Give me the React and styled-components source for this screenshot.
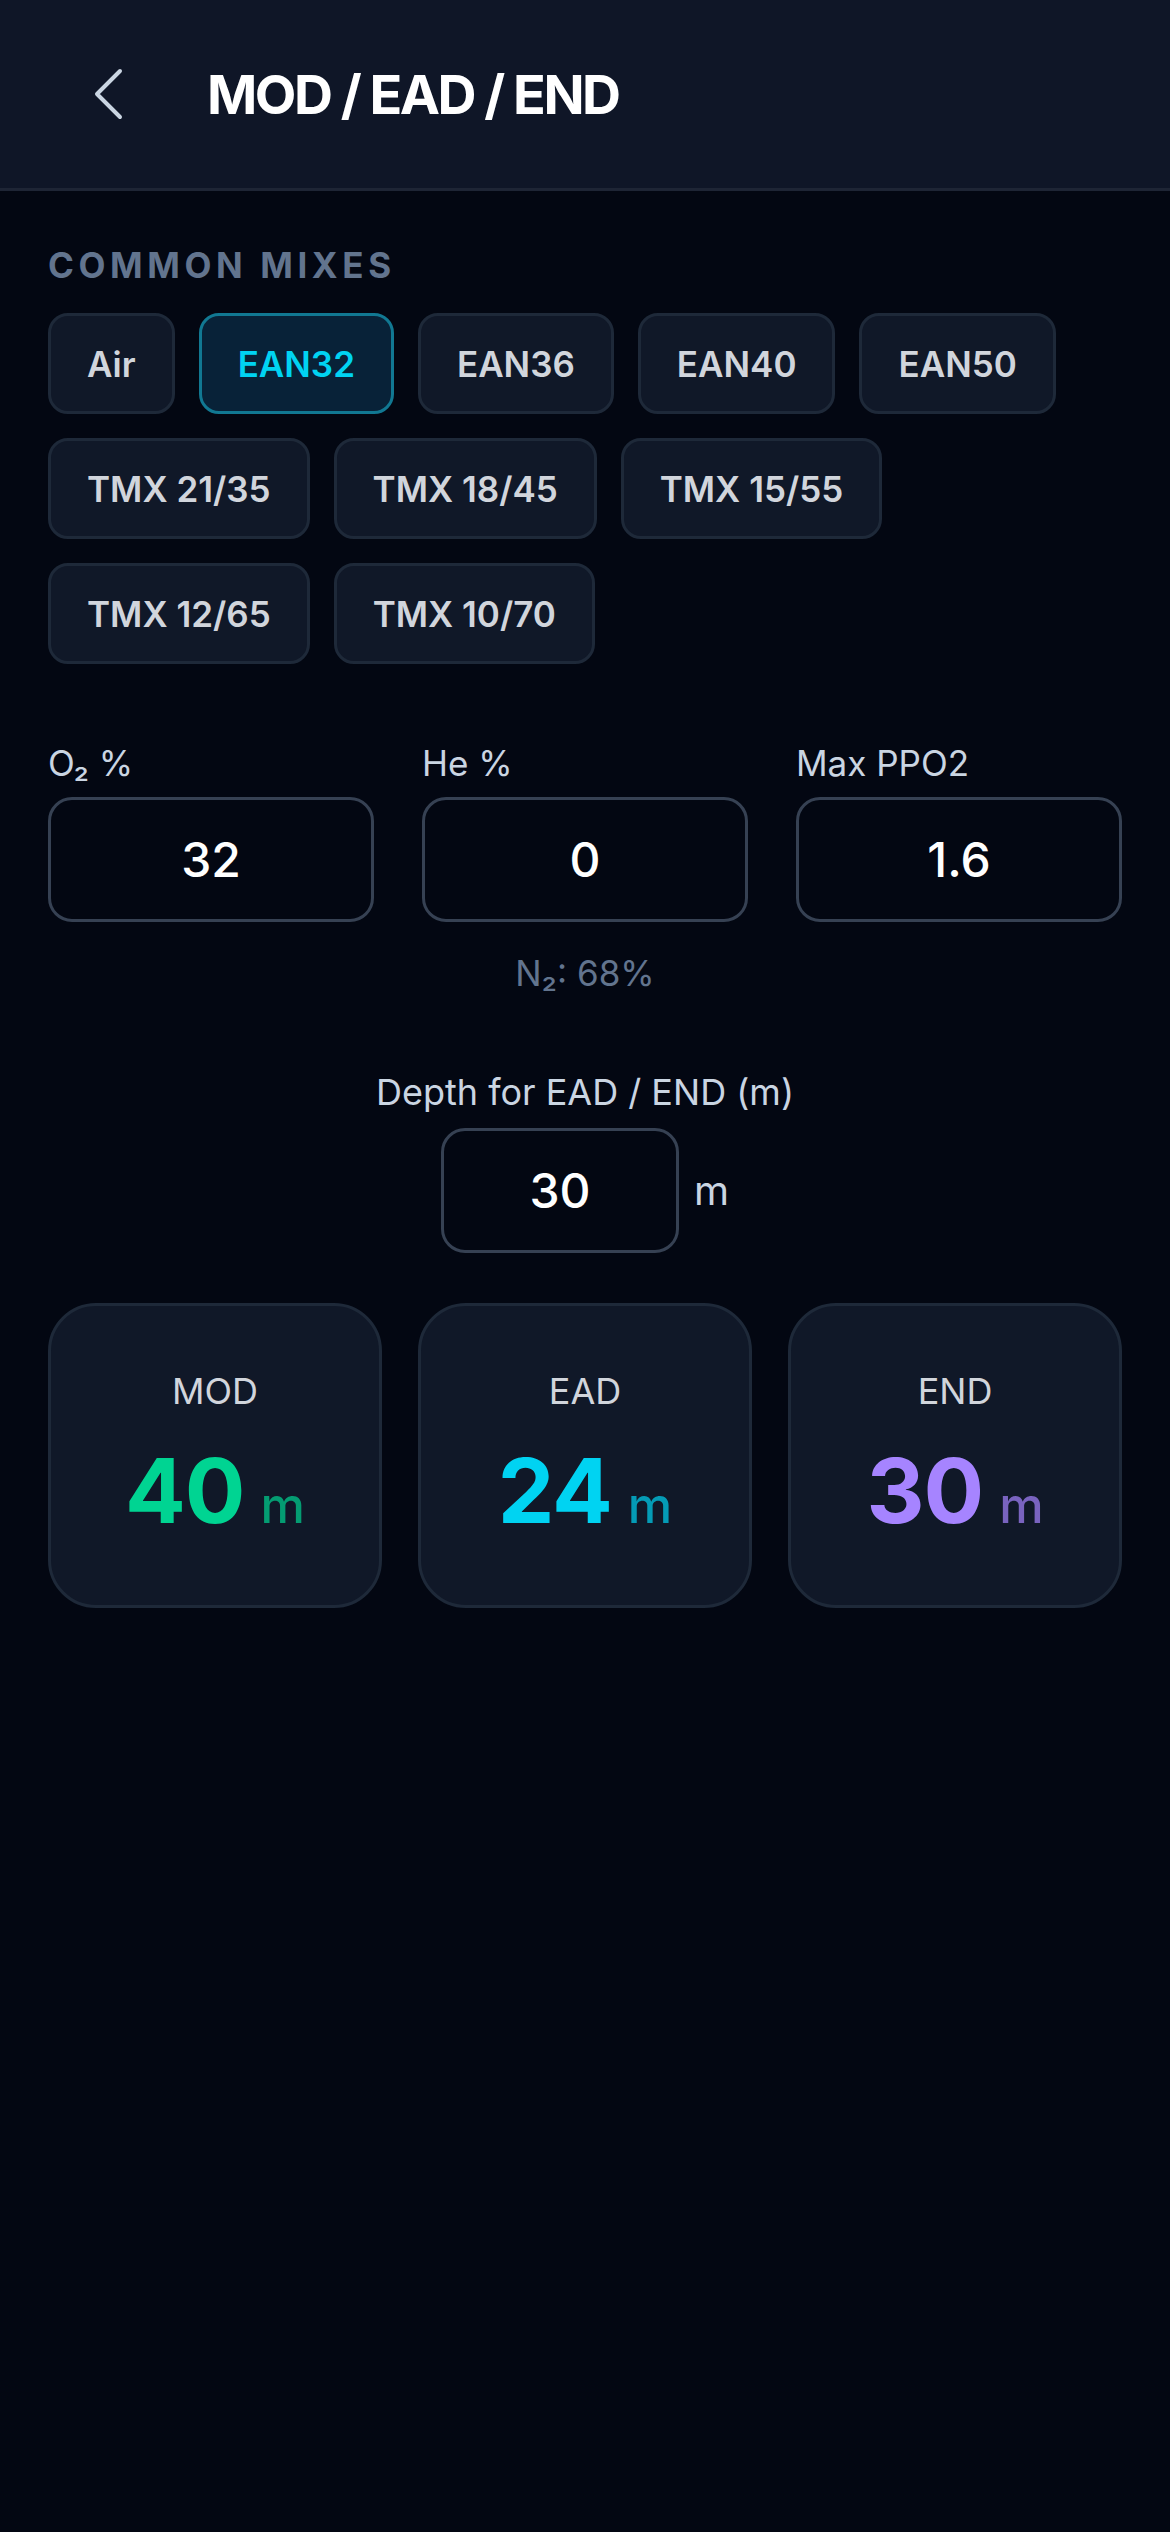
import React from "react";
import styled, { createGlobalStyle } from "styled-components";

const GlobalStyle = createGlobalStyle`
  html, body {
    margin: 0;
    padding: 0;
    background: #030712;
  }
  body {
    font-family: Inter, "Noto Sans", "Liberation Sans", sans-serif;
    color: #d1d5dc;
    min-height: 2532px;
  }
  * {
    box-sizing: border-box;
  }
`;

const Screen = styled.div`
  width: 1170px;
  min-height: 2532px;
  background: #030712;
`;

const Header = styled.header`
  height: 191px;
  display: flex;
  align-items: center;
  padding: 0 0 0 94px;
  background: #0f1627;
  border-bottom: 3px solid #1e2535;
`;

const BackButton = styled.button`
  all: unset;
  box-sizing: border-box;
  width: 30px;
  height: 52px;
  display: flex;
  align-items: center;
  justify-content: center;
  margin-right: 83px;
  color: #cad5e2;
`;

const Title = styled.h1`
  margin: 0;
  font-size: 54px;
  font-weight: 700;
  letter-spacing: -2.5px;
  color: #ffffff;
`;

const Content = styled.main`
  padding: 54px 48px 0;
`;

const SectionLabel = styled.div`
  font-size: 35px;
  line-height: 40px;
  font-weight: 700;
  letter-spacing: 4.6px;
  color: #62748e;
  margin-bottom: 28px;
`;

const ChipWrap = styled.div`
  display: flex;
  flex-wrap: wrap;
  gap: 24px;
`;

const Chip = styled.button`
  all: unset;
  box-sizing: border-box;
  height: 101px;
  padding: 0 36px;
  display: flex;
  align-items: center;
  border-radius: 20px;
  font-size: 35px;
  font-weight: 600;
  border: 3px solid ${(p) => (p.$active ? "#117892" : "#1e2939")};
  background: ${(p) => (p.$active ? "#082238" : "#101828")};
  color: ${(p) => (p.$active ? "#00d3f2" : "#d1d5dc")};
`;

const FieldGrid = styled.div`
  display: grid;
  grid-template-columns: repeat(3, 1fr);
  gap: 48px;
  margin-top: 79px;
`;

const Field = styled.div`
  display: flex;
  flex-direction: column;
`;

const FieldLabel = styled.label`
  font-size: 35px;
  line-height: 40px;
  color: #cad5e2;
  margin-bottom: 14px;
`;

const NumberBox = styled.div`
  height: 125px;
  width: ${(p) => p.$width || "100%"};
  display: flex;
  align-items: center;
  justify-content: center;
  border: 3px solid #364153;
  border-radius: 24px;
  background: #030712;
  font-size: 48px;
  font-weight: 500;
  color: #ffffff;
`;

const Note = styled.div`
  margin-top: 31px;
  text-align: center;
  font-size: 35px;
  line-height: 40px;
  color: #62748e;
`;

const DepthSection = styled.div`
  margin-top: 79px;
  display: flex;
  flex-direction: column;
  align-items: center;
`;

const DepthLabel = styled.div`
  font-size: 36px;
  line-height: 40px;
  color: #cad5e2;
  margin-bottom: 16px;
`;

const DepthRow = styled.div`
  display: flex;
  align-items: center;
  gap: 15px;
`;

const Unit = styled.span`
  font-size: 40px;
  color: #cad5e2;
`;

const Results = styled.div`
  display: grid;
  grid-template-columns: repeat(3, 1fr);
  gap: 36px;
  margin-top: 50px;
`;

const ResultCard = styled.div`
  height: 305px;
  display: flex;
  flex-direction: column;
  align-items: center;
  justify-content: center;
  padding-bottom: 5px;
  background: #101828;
  border: 3px solid #1e2939;
  border-radius: 48px;
`;

const ResultLabel = styled.div`
  font-size: 36px;
  line-height: 40px;
  color: #d1d5dc;
  margin-bottom: 35px;
`;

const ResultValue = styled.div`
  display: flex;
  align-items: baseline;
  gap: 16px;
  color: ${(p) => p.$color};
`;

const BigNumber = styled.span`
  font-size: 90px;
  line-height: 90px;
  font-weight: 700;
  letter-spacing: -1px;
`;

const ResultUnit = styled.span`
  font-size: 50px;
  font-weight: 500;
  opacity: 0.7;
`;

const mixes = [
  "Air",
  "EAN32",
  "EAN36",
  "EAN40",
  "EAN50",
  "TMX 21/35",
  "TMX 18/45",
  "TMX 15/55",
  "TMX 12/65",
  "TMX 10/70",
];

const results = [
  { label: "MOD", value: 40, color: "#00d492" },
  { label: "EAD", value: 24, color: "#00d3f2" },
  { label: "END", value: 30, color: "#a684ff" },
];

const ChevronLeft = () => (
  <svg width="30" height="52" viewBox="0 0 30 52" fill="none">
    <path
      d="M26 3 L3 26 L26 49"
      stroke="currentColor"
      strokeWidth="4"
      strokeLinecap="round"
      strokeLinejoin="round"
    />
  </svg>
);

export default function App() {
  return (
    <>
      <GlobalStyle />
      <Screen>
        <Header>
          <BackButton aria-label="Back">
            <ChevronLeft />
          </BackButton>
          <Title>MOD / EAD / END</Title>
        </Header>
        <Content>
          <SectionLabel>COMMON MIXES</SectionLabel>
          <ChipWrap>
            {mixes.map((m) => (
              <Chip key={m} $active={m === "EAN32"}>
                {m}
              </Chip>
            ))}
          </ChipWrap>

          <FieldGrid>
            <Field>
              <FieldLabel>O₂ %</FieldLabel>
              <NumberBox>32</NumberBox>
            </Field>
            <Field>
              <FieldLabel>He %</FieldLabel>
              <NumberBox>0</NumberBox>
            </Field>
            <Field>
              <FieldLabel>Max PPO2</FieldLabel>
              <NumberBox>1.6</NumberBox>
            </Field>
          </FieldGrid>
          <Note>N₂: 68%</Note>

          <DepthSection>
            <DepthLabel>Depth for EAD / END (m)</DepthLabel>
            <DepthRow>
              <NumberBox $width="238px">30</NumberBox>
              <Unit>m</Unit>
            </DepthRow>
          </DepthSection>

          <Results>
            {results.map((r) => (
              <ResultCard key={r.label}>
                <ResultLabel>{r.label}</ResultLabel>
                <ResultValue $color={r.color}>
                  <BigNumber>{r.value}</BigNumber>
                  <ResultUnit>m</ResultUnit>
                </ResultValue>
              </ResultCard>
            ))}
          </Results>
        </Content>
      </Screen>
    </>
  );
}
